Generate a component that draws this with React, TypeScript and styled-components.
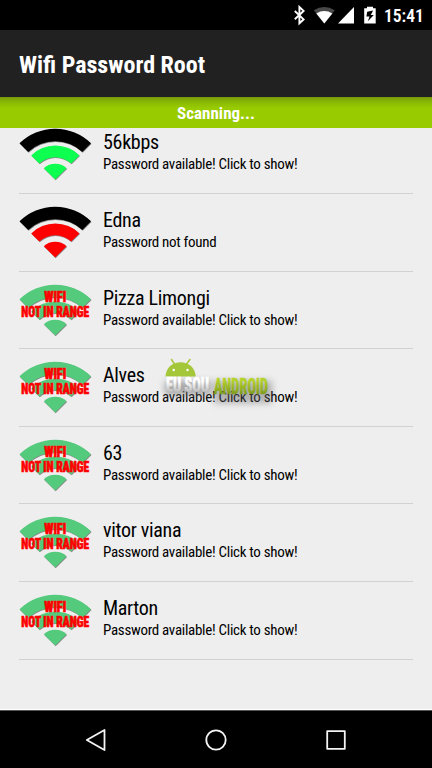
import React from "react";
import styled, { createGlobalStyle } from "styled-components";

const GlobalStyle = createGlobalStyle`
  * { box-sizing: border-box; }
  body { margin: 0; background: #000; }
`;

const Screen = styled.div`
  position: relative;
  display: flex;
  flex-direction: column;
  width: 432px;
  height: 768px;
  overflow: hidden;
  background: #eee;
  font-family: "Roboto Condensed", Roboto, sans-serif;
  font-stretch: 75%;
  color: #000;
`;

const StatusBar = styled.header`
  display: flex;
  flex: none;
  justify-content: flex-end;
  height: 30px;
  background: #000;
`;

const StatusIcons = styled.svg`
  display: block;
  width: 100px;
  height: 30px;
`;

const Clock = styled.span`
  width: 48px;
  color: #fff;
  font-size: 17.5px;
  font-weight: 600;
  line-height: 32px;
  white-space: nowrap;
`;

const AppBar = styled.div`
  flex: none;
  height: 67px;
  padding-left: 19px;
  background: #212121;
`;

const Title = styled.h1`
  margin: 0;
  color: #fff;
  font-size: 24px;
  font-weight: 700;
  line-height: 70px;
`;

const Banner = styled.div`
  flex: none;
  height: 31px;
  background: linear-gradient(#74970d 0, #80a808 2px, #8cbc03 6px, #98cb00 11px);
  color: #fff;
  font-size: 17px;
  font-weight: 700;
  line-height: 33px;
  text-align: center;
`;

const ListView = styled.main`
  flex: 1;
  min-height: 0;
  overflow: hidden;
  border-bottom: 1px solid #fff;
`;

const Networks = styled.ul`
  margin: -11.6px 19px 0;
  padding: 0;
  list-style: none;
`;

const Network = styled.li`
  display: flex;
  height: 77.6px;
  padding-top: 12px;
  border-bottom: 1px solid #d2d2d2;
`;

const SignalIcon = styled.svg`
  flex: none;
  display: block;
  width: 73px;
  height: 53px;
  overflow: visible;
`;

const Details = styled.div`
  padding: 1px 0 0 11px;
  white-space: nowrap;
`;

const Name = styled.div`
  font-size: 20px;
  line-height: 26px;
  letter-spacing: -0.3px;
`;

const Hint = styled.div`
  font-size: 15px;
  line-height: 18px;
  letter-spacing: -0.29px;
`;

const Watermark = styled.svg`
  position: absolute;
  left: 155px;
  top: 352px;
  width: 126px;
  height: 64px;
`;

const NavBar = styled.nav`
  display: flex;
  flex: none;
  justify-content: space-between;
  align-items: center;
  height: 58px;
  padding: 0 84px;
  border-top: 1px solid #555;
  background: #000;
`;

const NavIcon = styled.svg`
  display: block;
  width: 24px;
  height: 24px;
  fill: none;
  stroke: #f4f4f4;
  stroke-width: 1.8;
  stroke-linejoin: round;
`;

type Status = "available" | "missing" | "away";

const colors: Record<Status, [string, string]> = {
  available: ["#000", "#0dff4f"],
  missing: ["#000", "#f00"],
  away: ["#54ca7c", "#54ca7c"],
};

const networks: { name: string; status: Status }[] = [
  { name: "56kbps", status: "available" },
  { name: "Edna", status: "missing" },
  { name: "Pizza Limongi", status: "away" },
  { name: "Alves", status: "away" },
  { name: "63", status: "away" },
  { name: "vitor viana", status: "away" },
  { name: "Marton", status: "away" },
];

function Signal({ status }: { status: Status }) {
  const [outer, inner] = colors[status];
  const arcs = [
    { d: "M0.5 15.3A51 51 0 0 1 72 15.3L63.3 24A39.5 39.5 0 0 0 9.2 24Z", fill: outer },
    { d: "M12.2 27.4A34.5 34.5 0 0 1 60.5 27.4L52.2 35.6A23.5 23.5 0 0 0 20.3 35.6Z", fill: inner },
    { d: "M24.8 40.2A17 17 0 0 1 47.6 40.2L36.2 51.5Z", fill: inner },
  ];
  return (
    <SignalIcon viewBox="0 0 73 53">
      {arcs.map((a) => (
        <path key={a.d} d={a.d} fill="#333" opacity="0.55" transform="translate(0.5 0.7)" />
      ))}
      {arcs.map((a) => (
        <path key={a.d} d={a.d} fill={a.fill} />
      ))}
      {status === "away" && (
        <g fill="#f00" stroke="#f00" strokeWidth="0.6" fontFamily="Roboto, sans-serif" fontWeight="900" fontSize="14" textAnchor="middle">
          <text x="36.2" y="18.2" textLength="22" lengthAdjust="spacingAndGlyphs">WIFI</text>
          <text x="36.2" y="33.2" textLength="68" lengthAdjust="spacingAndGlyphs">NOT IN RANGE</text>
        </g>
      )}
    </SignalIcon>
  );
}

export default function App() {
  return (
    <>
      <GlobalStyle />
      <Screen>
        <StatusBar>
          <StatusIcons viewBox="284 0 100 30">
            <path d="M294.8 11L303.6 19.4L299.4 23.3V7L303.6 10.9L294.8 19.3" fill="none" stroke="#fff" strokeWidth="1.9" />
            <path d="M313.8 10.3Q324.3 3.6 334.8 10.3L324.3 23.5Z" fill="#484848" />
            <path d="M316.3 13.4Q324.3 8.6 332.3 13.4L324.3 23.5Z" fill="#fff" />
            <path d="M338 23.5H354V7Z" fill="#fff" />
            <path d="M364.2 8.3H367V6.7H373V8.3H375.7V23.5H364.2Z" fill="#fff" />
            <path d="M373.1 10.6L367.2 11.7L366.4 16.4H369.5L367.9 21.2L373.8 14.9H370.8Z" fill="#000" />
          </StatusIcons>
          <Clock>15:41</Clock>
        </StatusBar>
        <AppBar>
          <Title>Wifi Password Root</Title>
        </AppBar>
        <Banner>Scanning...</Banner>
        <ListView>
          <Networks>
            {networks.map((n) => (
              <Network key={n.name}>
                <Signal status={n.status} />
                <Details>
                  <Name>{n.name}</Name>
                  <Hint>{n.status === "missing" ? "Password not found" : "Password available! Click to show!"}</Hint>
                </Details>
              </Network>
            ))}
          </Networks>
        </ListView>
        <NavBar>
          <NavIcon viewBox="0 0 24 24"><path d="M2.8 12L20.5 2V22Z" /></NavIcon>
          <NavIcon viewBox="0 0 24 24"><circle cx="12" cy="12" r="9.7" /></NavIcon>
          <NavIcon viewBox="0 0 24 24"><rect x="3.2" y="3.2" width="17.6" height="17.6" /></NavIcon>
        </NavBar>
        <Watermark viewBox="155 352 126 64">
          <defs>
            <filter id="haze" x="-20%" y="-60%" width="140%" height="220%">
              <feGaussianBlur stdDeviation="3.5" />
            </filter>
            <linearGradient id="silver" gradientUnits="userSpaceOnUse" x1="0" y1="377" x2="0" y2="393">
              <stop offset="0.3" stopColor="#fff" />
              <stop offset="1" stopColor="#b4b4b4" />
            </linearGradient>
            <linearGradient id="lime" gradientUnits="userSpaceOnUse" x1="0" y1="377" x2="0" y2="394">
              <stop offset="0.2" stopColor="#b4d22c" />
              <stop offset="1" stopColor="#7e9c1c" />
            </linearGradient>
          </defs>
          <path d="M165 381H211V395H165Z" fill="#777" opacity="0.6" filter="url(#haze)" />
          <path d="M214 381H272V403H214Z" fill="#666" opacity="0.45" filter="url(#haze)" />
          <path d="M174.5 364L171.5 359.5M186.5 364L190 359.5" stroke="#a4c639" strokeWidth="1.5" strokeLinecap="round" />
          <path d="M165.5 376.5C166.5 357.5 194.5 357.5 195.8 376.5Z" fill="#a4c639" />
          <circle cx="173.7" cy="370" r="1.2" fill="#fff" />
          <circle cx="187.5" cy="370" r="1.2" fill="#fff" />
          <g fontFamily="Roboto, sans-serif" fontWeight="800" strokeWidth="0.5">
            <text x="166" y="391.8" fontSize="19.5" fill="url(#silver)" stroke="url(#silver)" textLength="43" lengthAdjust="spacingAndGlyphs">EU SOU</text>
            <text x="214" y="393.5" fontSize="22" fill="url(#lime)" stroke="url(#lime)" textLength="54" lengthAdjust="spacingAndGlyphs">ANDROID</text>
          </g>
        </Watermark>
      </Screen>
    </>
  );
}
